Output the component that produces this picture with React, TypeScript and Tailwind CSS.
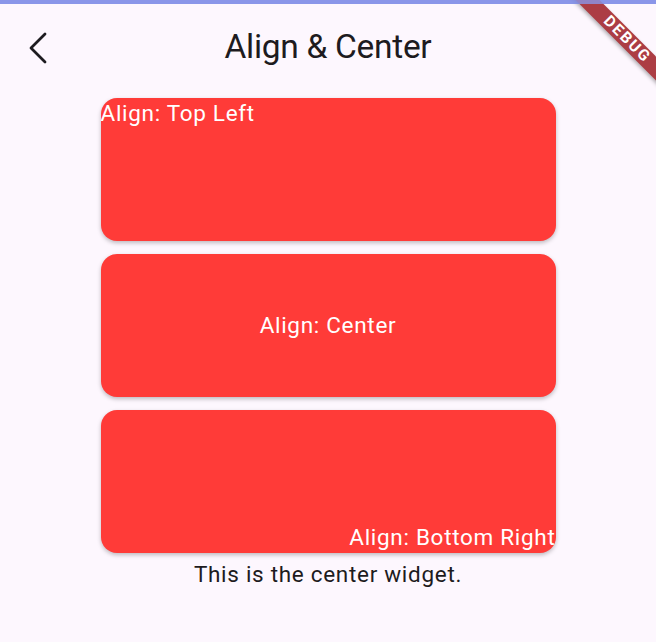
import React from "react";

export default function App() {
  return (
    <div className="relative w-[656px] h-[642px] overflow-hidden bg-[#fdf7fe]" style={{ fontFamily: "Roboto, 'Noto Sans', sans-serif" }}>
      <div className="h-[4px] w-full bg-[#8a96e8]" />
      <div className="relative flex h-[88px] items-center justify-center">
        <svg className="absolute left-[26px] top-[27px]" width="24" height="34" viewBox="0 0 24 34" fill="none">
          <path d="M19 3 L5 17 L19 31" stroke="#1d1b20" strokeWidth="2.8" strokeLinecap="round" strokeLinejoin="round" />
        </svg>
        <div className="mt-[-2px] text-[33.5px] leading-[40px] text-[#1d1b20] tracking-[-0.3px]">Align &amp; Center</div>
      </div>
      <div className="flex flex-col items-center gap-[13px] mt-[6px]">
        <div className="flex h-[143px] w-[455px] items-start justify-start overflow-hidden rounded-[16px] bg-[#ff3b38] shadow-[0_2px_4px_rgba(0,0,0,0.25)]">
          <span className="whitespace-nowrap text-[22.5px] leading-[31px] tracking-[0.7px] text-white">Align: Top Left</span>
        </div>
        <div className="flex h-[143px] w-[455px] items-center justify-center overflow-hidden rounded-[16px] bg-[#ff3b38] shadow-[0_2px_4px_rgba(0,0,0,0.25)]">
          <span className="whitespace-nowrap text-[22.5px] leading-[31px] tracking-[0.7px] text-white">Align: Center</span>
        </div>
        <div className="flex h-[143px] w-[455px] items-end justify-end overflow-hidden rounded-[16px] bg-[#ff3b38] shadow-[0_2px_4px_rgba(0,0,0,0.25)]">
          <span className="whitespace-nowrap text-[22.5px] leading-[31px] tracking-[0.7px] text-white">Align: Bottom Right</span>
        </div>
      </div>
      <div className="mt-[6px] text-center text-[22.5px] leading-[31px] tracking-[0.7px] text-[#1d1b20]">This is the center widget.</div>

      <div className="pointer-events-none absolute right-0 top-0 h-[100px] w-[100px] overflow-hidden">
        <div className="absolute left-[-9px] top-[31px] flex h-[17px] w-[160px] rotate-45 items-center justify-center bg-[#ac3d44] shadow-[0_2px_4px_rgba(0,0,0,0.3)]">
          <span className="text-[15.5px] font-bold leading-none tracking-[2px] text-white">DEBUG</span>
        </div>
      </div>
      <div className="absolute left-0 top-0 h-[4px] w-full bg-[#8a96e8]/80" />
    </div>
  );
}
